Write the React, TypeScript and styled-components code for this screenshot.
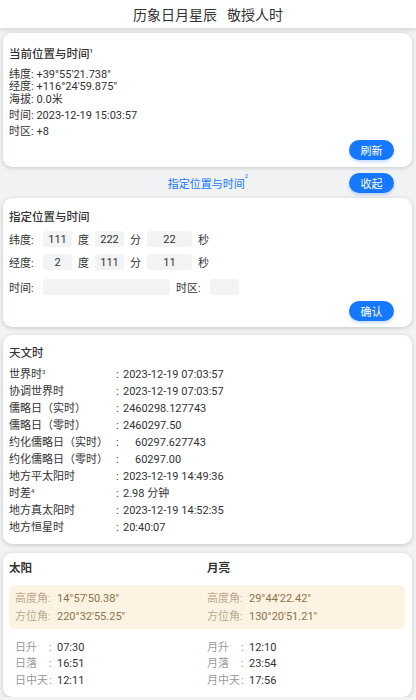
import React from "react";
import styled, { createGlobalStyle } from "styled-components";

const GlobalStyle = createGlobalStyle`
  html, body {
    margin: 0;
    padding: 0;
    background: #f1f2f4;
    font-family: Roboto, "Noto Sans CJK SC", sans-serif;
    color: #333;
  }
`;

const Page = styled.div`
  width: 416px;
  display: flex;
  flex-direction: column;
`;

const Header = styled.div`
  height: 28px;
  background: #fff;
  box-shadow: 0 2px 4px rgba(0, 0, 0, 0.12);
  display: flex;
  align-items: center;
  justify-content: center;
  gap: 10px;
  font-size: 14px;
  color: #333;
`;

const Card = styled.div<{ $top?: number; $pt?: number; $pb?: number }>`
  margin: ${(p) => p.$top ?? 8}px 4px 0 3px;
  background: #fff;
  border-radius: 9px;
  box-shadow: 0 1px 4px rgba(0, 0, 0, 0.18);
  padding: ${(p) => p.$pt ?? 10}px 7px ${(p) => p.$pb ?? 7}px 6px;
  display: flex;
  flex-direction: column;
`;

const CardTitle = styled.div<{ $mb?: number }>`
  font-size: 11.5px;
  font-weight: 500;
  line-height: 18px;
  color: #333;
  margin-bottom: ${(p) => p.$mb ?? 0}px;
`;

const Sup = styled.sup`
  font-size: 6px;
  vertical-align: top;
  position: relative;
  top: -3px;
`;

const Line = styled.div<{ $h?: number; $mt?: number }>`
  font-size: 11px;
  line-height: ${(p) => p.$h ?? 16}px;
  margin-top: ${(p) => p.$mt ?? 0}px;
  color: #333;
  white-space: pre;
`;

const ButtonRow = styled.div<{ $mt?: number }>`
  display: flex;
  justify-content: flex-end;
  padding-right: 11px;
  margin-top: ${(p) => p.$mt ?? 2}px;
`;

const PillButton = styled.button`
  width: 45px;
  height: 20px;
  border: none;
  border-radius: 10px;
  background: #1677ff;
  color: #fff;
  font-family: Roboto, "Noto Sans CJK SC", sans-serif;
  font-size: 11px;
  padding: 0;
  box-shadow: 0 2px 3px rgba(22, 119, 255, 0.25);
`;

const ToggleRow = styled.div`
  height: 31px;
  display: grid;
  grid-template-columns: 1fr auto 1fr;
  align-items: center;
`;

const ToggleLink = styled.span`
  grid-column: 2;
  color: #1677ff;
  font-size: 11px;
`;

const ToggleRight = styled.div`
  grid-column: 3;
  display: flex;
  justify-content: flex-end;
  padding-right: 22px;
`;

const FormRow = styled.div<{ $mt?: number }>`
  display: flex;
  align-items: center;
  height: 23px;
  margin-top: ${(p) => p.$mt ?? 0}px;
  font-size: 11px;
  color: #333;
`;

const Unit = styled.span<{ $w?: number }>`
  width: ${(p) => p.$w ?? 23}px;
  text-align: center;
`;

const Label = styled.span`
  width: 34px;
`;

const Field = styled.div<{ $w: number }>`
  width: ${(p) => p.$w}px;
  height: 16px;
  background: #f2f3f5;
  border-radius: 3px;
  display: flex;
  align-items: center;
  justify-content: center;
  font-size: 11px;
  color: #333;
`;

const InfoGrid = styled.div`
  display: grid;
  grid-template-columns: 107px 1fr;
  margin-top: 3.5px;
  font-size: 11px;
  line-height: 17.1px;
  color: #333;
`;

const InfoValue = styled.span<{ $indent?: boolean }>`
  white-space: pre;
  &::before {
    content: ":";
    display: inline-block;
    width: ${(p) => (p.$indent ? 19 : 7)}px;
  }
`;

const BodyGrid = styled.div`
  display: grid;
  grid-template-columns: 198px 1fr;
  margin-bottom: 8px;
`;

const BodyTitle = styled.div`
  font-size: 11.5px;
  font-weight: 700;
  color: #333;
  line-height: 18px;
`;

const Highlight = styled.div`
  display: grid;
  grid-template-columns: 192px 1fr;
  background: #fdf3e3;
  border-radius: 6px;
  padding: 5px 6px 3px;
`;

const HlLine = styled.div`
  font-size: 11px;
  line-height: 18px;
  color: #8e7249;
`;

const HlLabel = styled.span`
  display: inline-block;
  width: 42px;
  color: #bba98d;
`;

const Times = styled.div`
  display: grid;
  grid-template-columns: 192px 1fr;
  padding: 10.75px 6px 2px;
`;

const TimeLine = styled.div`
  font-size: 11px;
  line-height: 16.5px;
  color: #333;
  display: flex;
`;

const TimeName = styled.span`
  width: 34px;
  color: #9a9a9a;
`;

const TimeColon = styled.span`
  width: 8px;
  color: #9a9a9a;
`;

const info: [React.ReactNode, string, boolean?][] = [
  [<>世界时<Sup>3</Sup></>, "2023-12-19 07:03:57"],
  ["协调世界时", "2023-12-19 07:03:57"],
  ["儒略日（实时）", "2460298.127743"],
  ["儒略日（零时）", "2460297.50"],
  ["约化儒略日（实时）", "60297.627743", true],
  ["约化儒略日（零时）", "60297.00", true],
  ["地方平太阳时", "2023-12-19 14:49:36"],
  [<>时差<Sup>4</Sup></>, "2.98 分钟"],
  ["地方真太阳时", "2023-12-19 14:52:35"],
  ["地方恒星时", "20:40:07"],
];

const positions = [
  ["高度角:", "14°57'50.38\"", "高度角:", "29°44'22.42\""],
  ["方位角:", "220°32'55.25\"", "方位角:", "130°20'51.21\""],
];

const riseSet = [
  ["日升", "07:30", "月升", "12:10"],
  ["日落", "16:51", "月落", "23:54"],
  ["日中天", "12:11", "月中天", "17:56"],
];

const App: React.FC = () => {
  return (
    <Page>
      <GlobalStyle />
      <Header>
        <span>历象日月星辰</span>
        <span>敬授人时</span>
      </Header>

      <Card $top={5} $pt={12}>
        <CardTitle $mb={5.75}>
          当前位置与时间<Sup>1</Sup>
        </CardTitle>
        <Line $h={12.5}>纬度: +39°55'21.738"</Line>
        <Line $h={12.5}>经度: +116°24'59.875"</Line>
        <Line $h={12.5}>海拔: 0.0米</Line>
        <Line $mt={1.75}>时间: 2023-12-19 15:03:57</Line>
        <Line>时区: +8</Line>
        <ButtonRow $mt={0}>
          <PillButton>刷新</PillButton>
        </ButtonRow>
      </Card>

      <ToggleRow>
        <ToggleLink>
          指定位置与时间<Sup>2</Sup>
        </ToggleLink>
        <ToggleRight>
          <PillButton>收起</PillButton>
        </ToggleRight>
      </ToggleRow>

      <Card $top={0} $pb={6}>
        <CardTitle $mb={1.5}>指定位置与时间</CardTitle>
        <FormRow>
          <Label>纬度:</Label>
          <Field $w={29}>111</Field>
          <Unit>度</Unit>
          <Field $w={29}>222</Field>
          <Unit>分</Unit>
          <Field $w={45}>22</Field>
          <Unit>秒</Unit>
        </FormRow>
        <FormRow>
          <Label>经度:</Label>
          <Field $w={29}>2</Field>
          <Unit>度</Unit>
          <Field $w={29}>111</Field>
          <Unit>分</Unit>
          <Field $w={45}>11</Field>
          <Unit>秒</Unit>
        </FormRow>
        <FormRow $mt={2}>
          <Label>时间:</Label>
          <Field $w={127} />
          <Unit $w={6} />
          <Label>时区:</Label>
          <Field $w={29} />
        </FormRow>
        <ButtonRow $mt={2.5}>
          <PillButton>确认</PillButton>
        </ButtonRow>
      </Card>

      <Card $pt={9} $pb={7.5}>
        <CardTitle>天文时</CardTitle>
        <InfoGrid>
          {info.map(([label, value, indent], i) => (
            <React.Fragment key={i}>
              <span>{label}</span>
              <InfoValue $indent={indent}>{value}</InfoValue>
            </React.Fragment>
          ))}
        </InfoGrid>
      </Card>

      <Card $top={9} $pt={6} $pb={6}>
        <BodyGrid>
          <BodyTitle>太阳</BodyTitle>
          <BodyTitle>月亮</BodyTitle>
        </BodyGrid>
        <Highlight>
          {positions.map((row, i) => (
            <React.Fragment key={i}>
              <HlLine>
                <HlLabel>{row[0]}</HlLabel>
                {row[1]}
              </HlLine>
              <HlLine>
                <HlLabel>{row[2]}</HlLabel>
                {row[3]}
              </HlLine>
            </React.Fragment>
          ))}
        </Highlight>
        <Times>
          {riseSet.map((row, i) => (
            <React.Fragment key={i}>
              <TimeLine>
                <TimeName>{row[0]}</TimeName>
                <TimeColon>:</TimeColon>
                {row[1]}
              </TimeLine>
              <TimeLine>
                <TimeName>{row[2]}</TimeName>
                <TimeColon>:</TimeColon>
                {row[3]}
              </TimeLine>
            </React.Fragment>
          ))}
        </Times>
      </Card>
    </Page>
  );
};

export default App;
